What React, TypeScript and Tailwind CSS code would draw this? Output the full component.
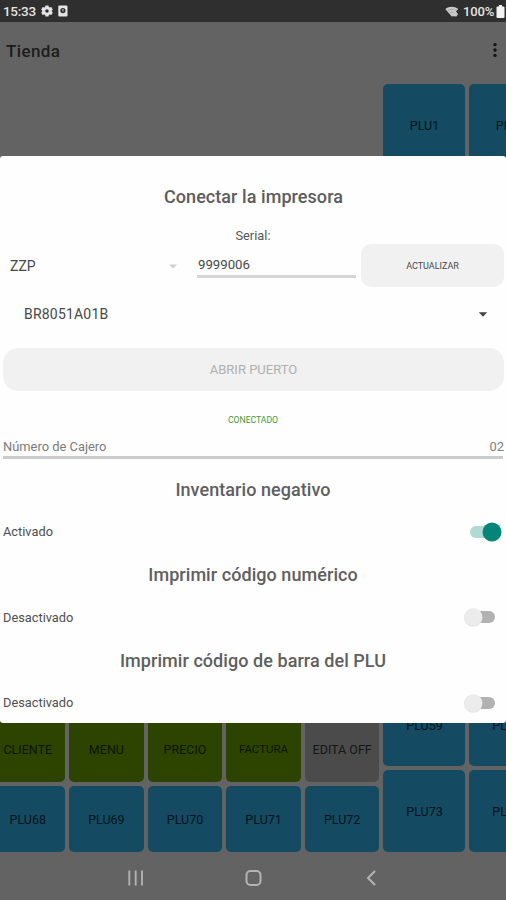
import clsx from 'clsx';

interface TileProps {
  label: string;
  className?: string;
}

const ACTION_KEYS = ['CLIENTE', 'MENU', 'PRECIO', 'FACTURA', 'EDITA OFF'];
const PLU_KEYS = ['PLU68', 'PLU69', 'PLU70', 'PLU71', 'PLU72'];
const SIDE_ROWS = [
  ['PLU1', 'PLU2'],
  ['PLU59', 'PLU60'],
  ['PLU73', 'PLU74'],
];

function Tile({ label, className }: TileProps) {
  return (
    <div
      className={clsx(
        'flex shrink-0 items-center justify-center overflow-hidden rounded-[5px] pt-[2px] whitespace-nowrap',
        className
      )}
    >
      {label}
    </div>
  );
}

function StatusBar() {
  return (
    <div className="flex h-[22px] shrink-0 items-center bg-[#2f2f2f] pl-[3px] text-[13px] font-medium text-[#e4e4e4]">
      <span className="w-[34px] pt-px text-[13.5px] tracking-[-0.3px]">15:33</span>
      <svg className="ml-1 h-3 w-3" viewBox="0 0 24 24" fill="currentColor">
        <path
          fillRule="evenodd"
          d="M9 1h6l.7 3.2 1.8 1L20.700 4.200l3 5.200-2.400 2.200v1l2.400 2.200-3 5.200-3.200-1-1.800 1L15 23H9l-.7-3-1.800-1-3.200 1-3-5.200 2.400-2.200v-1L.3 9.400l3-5.200 3.200 1 1.800-1zM12 8.500a3.500 3.500 0 1 0 0 7 3.500 3.500 0 0 0 0-7z"
        />
      </svg>
      <svg className="ml-[5px] h-3 w-[10px]" viewBox="0 0 10 12">
        <rect x="0.300" y="0.500" width="9.200" height="11" rx="1.200" fill="#e4e4e4" />
        <circle cx="4.900" cy="5.600" r="2.600" fill="#2f2f2f" />
        <path d="M4 4.700h1.900M4.900 4.700v2.200" stroke="#bdbdbd" strokeWidth="0.800" />
      </svg>
      <svg className="ml-auto h-[11px] w-[14px]" viewBox="0 0 14 11">
        <path d="M0.300 3C4 0 9.500 0 13.200 3L11 5.600 13 8 11.500 10.500 8 10.300 6.700 10.500z" fill="#c9c9c9" />
        <path d="M3 4.600c2.300-1.600 5-1.700 7.400-.3M5 7c1.200-.8 2.600-.8 3.600-.2" stroke="#999" fill="none" strokeWidth="0.700" />
      </svg>
      <span className="ml-[4px] w-[32px] pt-px tracking-[-0.1px]">100%</span>
      <svg className="ml-px mr-px h-[13px] w-[9px]" viewBox="0 0 9 13" fill="#f2f2f2">
        <path d="M3 0h3v1.500h1.500A1 1 0 0 1 8.500 2.500V12a1 1 0 0 1-1 1h-6a1 1 0 0 1-1-1V2.500a1 1 0 0 1 1-1H3z" />
      </svg>
    </div>
  );
}

function AppBar() {
  return (
    <div className="flex h-[62px] shrink-0 items-start justify-between pt-[19px] pl-[6px] pr-[9px]">
      <h1 className="text-[17px] leading-5 font-medium tracking-[0.4px] text-[#1c1c1c]">Tienda</h1>
      <svg className="mt-px h-4 w-1" viewBox="0 0 4 16" fill="#141414">
        <circle cx="2" cy="2.600" r="1.700" />
        <circle cx="2" cy="8" r="1.700" />
        <circle cx="2" cy="13.400" r="1.700" />
      </svg>
    </div>
  );
}

function Board() {
  return (
    <div className="flex h-[768px] shrink-0 justify-between overflow-hidden">
      <div className="-ml-[9.500px] flex flex-col justify-end gap-1">
        <div className="flex gap-1">
          {ACTION_KEYS.map((label) => (
            <Tile
              key={label}
              label={label}
              className={clsx(
                'h-[66px] w-[74.600px]',
                label === 'FACTURA' ? 'text-[11.500px]' : 'text-[12.500px]',
                label === 'EDITA OFF' ? 'bg-[#4b4b4b] text-[#151515]' : 'bg-[#2c4400] text-[#0c1400]'
              )}
            />
          ))}
        </div>
        <div className="flex gap-1">
          {PLU_KEYS.map((label) => (
            <Tile
              key={label}
              label={label}
              className="h-[66px] w-[74.600px] bg-[#144b62] text-[12.500px] text-[#04131b]"
            />
          ))}
        </div>
      </div>
      <div className="flex w-[123px] flex-col gap-[3.500px]">
        {SIDE_ROWS.map((row, i) => (
          <div key={row[0]} className={clsx('flex gap-1', i === 1 && 'mt-auto')}>
            {row.map((label) => (
              <Tile
                key={label}
                label={label}
                className="h-[82.200px] w-[82px] bg-[#144b62] pl-px text-[12.500px] text-[#04131b]"
              />
            ))}
          </div>
        ))}
      </div>
    </div>
  );
}

function NavBar() {
  return (
    <div className="flex flex-1 items-center justify-between pt-1 pr-[129px] pl-[127px]">
      <svg className="h-4 w-[17px]" viewBox="0 0 17 16" stroke="#b4b4b4" strokeWidth="1.800">
        <path d="M2.300 0.500v15M8.700 0.500v15M15 0.500v15" />
      </svg>
      <svg className="mr-[3px] h-4 w-[17px]" viewBox="0 0 17 16" stroke="#b4b4b4" strokeWidth="2" fill="none">
        <rect x="1.500" y="1" width="14" height="14" rx="4" />
      </svg>
      <svg className="h-4 w-[12px]" viewBox="0 0 12 16" stroke="#b4b4b4" strokeWidth="2" fill="none">
        <path d="M10 1 3 8l7 7" />
      </svg>
    </div>
  );
}

function Toggle({ on }: { on?: boolean }) {
  return (
    <svg className="mr-[2px] mb-[2px] h-6 w-10" viewBox="0 0 40 24">
      <rect x="6" y="6" width="25" height="12" rx="6" fill={on ? '#b2dad5' : '#b1b1b1'} />
      {!on && <circle cx="9.300" cy="12.600" r="9.200" fill="#dedede" />}
      <circle cx={on ? 28 : 9.300} cy="12" r={on ? 9.500 : 8.900} fill={on ? '#058577' : '#ececec'} />
    </svg>
  );
}

function Setting({ title, on }: { title: string; on?: boolean }) {
  return (
    <section className="h-[85.300px]">
      <h2 className="h-[22px] text-center text-[18px] leading-[22px] font-medium tracking-[0.06px] text-[#5f5f5f]">
        {title}
      </h2>
      <div className="mt-5 flex h-6 items-center justify-between pl-[3px]">
        <span className="pb-[2px] text-[12.800px] text-[#4f4f4f]">{on ? 'Activado' : 'Desactivado'}</span>
        <Toggle on={on} />
      </div>
    </section>
  );
}

function PrinterDialog() {
  return (
    <div className="absolute inset-x-0 top-[156px] h-[567px] overflow-hidden rounded-[3px] bg-[#fefefe] text-[#484848]">
      <h2 className="mt-[30px] pl-px text-center text-[18px] leading-[22px] font-medium tracking-[0.06px] text-[#5c5c5c]">
        Conectar la impresora
      </h2>
      <div className="mt-[20px] text-center text-[12.800px] leading-4 text-[#555]">Serial:</div>

      <div className="flex h-[43px] items-center pr-[2px]">
        <div className="flex w-[178px] items-center justify-between pt-[2px] pl-[10px]">
          <span className="text-[14px]">ZZP</span>
          <svg className="h-[5px] w-[10px]" viewBox="0 0 10 5" fill="#cfcfcf">
            <path d="M1 .5h8L5 4.500z" />
          </svg>
        </div>
        <div className="mt-[1px] ml-[19px] flex h-[24px] w-[159px] items-start border-b-[3px] border-[#d6d6d6] pl-px text-[13.200px] leading-[22px]">
          9999006
        </div>
        <button className="ml-[5px] h-[43px] flex-1 rounded-[10px] bg-[#f1f1f1] pt-[2px] text-[9px]">
          ACTUALIZAR
        </button>
      </div>

      <div className="mt-[15px] flex h-6 items-center justify-between pr-[18px] pl-[24px]">
        <span className="text-[14px] tracking-[0.2px]">BR8051A01B</span>
        <svg className="h-[5px] w-[10px]" viewBox="0 0 10 5" fill="#444">
          <path d="M.8.300h8.400L5 4.800z" />
        </svg>
      </div>

      <button className="mt-[22px] ml-[3px] block h-[43px] w-[501px] rounded-[15px] bg-[#f1f1f1] pt-px text-[13px] text-[#b0b0b0]">
        ABRIR PUERTO
      </button>

      <div className="mt-[23px] text-center text-[8.700px] leading-3 tracking-[-0.05px] text-[#3c9a3f]">CONECTADO</div>

      <div className="mx-[3px] mt-[11px] flex h-[22px] justify-between border-b-[3px] border-[#cbcbcb] text-[12.900px] leading-[19px] text-[#7b7b7b]">
        <span>Número de Cajero</span>
        <span className="-mr-px">02</span>
      </div>

      <div className="mt-[20px]">
        <Setting title="Inventario negativo" on />
        <Setting title="Imprimir código numérico" />
        <Setting title="Imprimir código de barra del PLU" />
      </div>
    </div>
  );
}

export default function App() {
  return (
    <div className="relative flex h-[900px] w-[506px] flex-col overflow-hidden bg-[#636363] font-['Roboto',sans-serif]">
      <StatusBar />
      <AppBar />
      <Board />
      <NavBar />
      <PrinterDialog />
    </div>
  );
}
